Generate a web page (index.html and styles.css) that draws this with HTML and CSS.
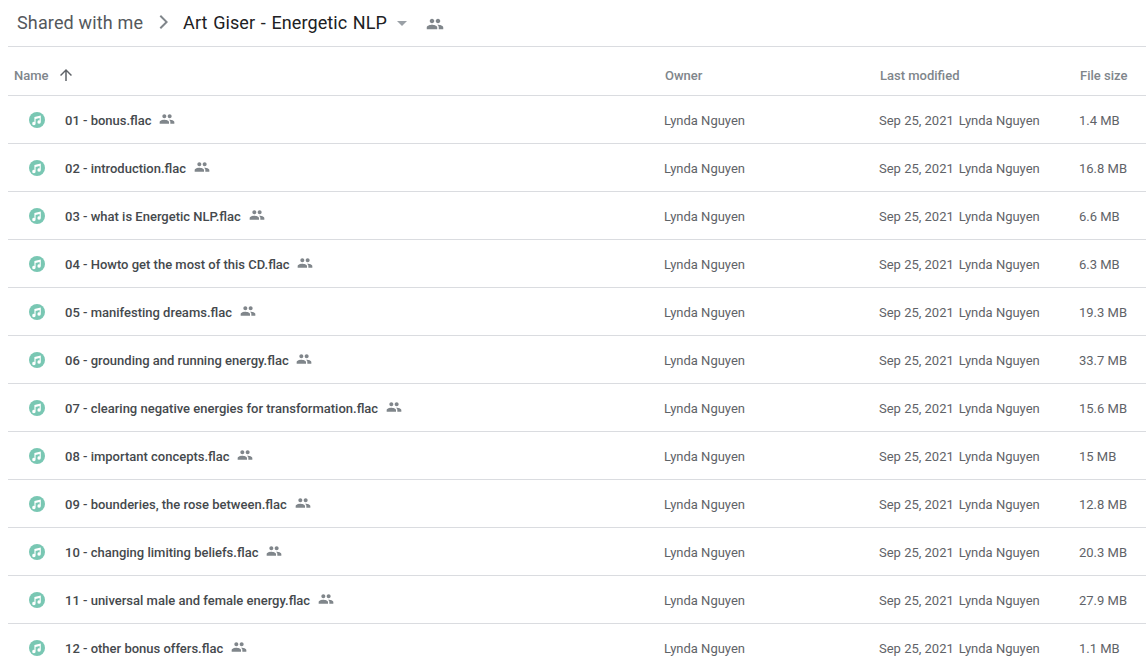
FILE: index.html
```html
<!DOCTYPE html>
<html lang="en">
<head>
<meta charset="utf-8">
<title>Art Giser - Energetic NLP</title>
<link rel="stylesheet" href="styles.css">
</head>
<body>
<svg class="defs" width="0" height="0" aria-hidden="true">
  <symbol id="people" viewBox="0 0 24 24"><path d="M16 11c1.66 0 2.99-1.34 2.99-3S17.66 5 16 5s-3 1.34-3 3 1.34 3 3 3zm-8 0c1.66 0 2.99-1.34 2.99-3S9.66 5 8 5 5 6.34 5 8s1.34 3 3 3zm0 2c-2.33 0-7 1.17-7 3.5V19h14v-2.5C15 14.17 10.33 13 8 13zm8 0c-.29 0-.62.02-.97.05 1.16.84 1.97 1.97 1.97 3.45V19h6v-2.5c0-2.33-4.67-3.5-7-3.5z"/></symbol>
  <symbol id="audio" viewBox="0 0 16 16"><circle cx="8" cy="8" r="8" fill="#79c7b3"/><path fill="#fff" d="M5.4 5 11.8 3.6v6.5a1.7 1.7 0 1 1-1.2-1.6V6L6.6 6.9v4.6a1.7 1.7 0 1 1-1.2-1.6z"/></symbol>
</svg>
<main class="page">
  <header class="crumbs">
    <span class="crumb-parent">Shared with me</span>
    <svg class="crumb-chevron" viewBox="0 0 24 24"><path d="M8.6 6.4 10 5l7 7-7 7-1.4-1.4 5.6-5.6z"/></svg>
    <span class="crumb-current">Art Giser - Energetic NLP</span>
    <span class="crumb-caret"></span>
    <svg class="crumb-people"><use href="#people"/></svg>
  </header>
  <div class="row head">
    <div class="cell-name head-name">Name
      <svg class="sort-arrow" viewBox="0 0 24 24"><path d="M4 12l1.41 1.41L11 7.83V20h2V7.83l5.58 5.59L20 12l-8-8-8 8z"/></svg>
    </div>
    <div class="cell-owner">Owner</div>
    <div class="cell-mod">Last modified</div>
    <div class="cell-size">File size</div>
  </div>
  <div class="row"><div class="cell-name"><svg class="file-icon"><use href="#audio"/></svg><span class="file-name">01 - bonus.flac</span><svg class="shared"><use href="#people"/></svg></div><div class="cell-owner">Lynda Nguyen</div><div class="cell-mod"><span class="date">Sep 25, 2021</span>Lynda Nguyen</div><div class="cell-size">1.4 MB</div></div>
  <div class="row"><div class="cell-name"><svg class="file-icon"><use href="#audio"/></svg><span class="file-name">02 - introduction.flac</span><svg class="shared"><use href="#people"/></svg></div><div class="cell-owner">Lynda Nguyen</div><div class="cell-mod"><span class="date">Sep 25, 2021</span>Lynda Nguyen</div><div class="cell-size">16.8 MB</div></div>
  <div class="row"><div class="cell-name"><svg class="file-icon"><use href="#audio"/></svg><span class="file-name">03 - what is Energetic NLP.flac</span><svg class="shared"><use href="#people"/></svg></div><div class="cell-owner">Lynda Nguyen</div><div class="cell-mod"><span class="date">Sep 25, 2021</span>Lynda Nguyen</div><div class="cell-size">6.6 MB</div></div>
  <div class="row"><div class="cell-name"><svg class="file-icon"><use href="#audio"/></svg><span class="file-name">04 - Howto get the most of this CD.flac</span><svg class="shared"><use href="#people"/></svg></div><div class="cell-owner">Lynda Nguyen</div><div class="cell-mod"><span class="date">Sep 25, 2021</span>Lynda Nguyen</div><div class="cell-size">6.3 MB</div></div>
  <div class="row"><div class="cell-name"><svg class="file-icon"><use href="#audio"/></svg><span class="file-name">05 - manifesting dreams.flac</span><svg class="shared"><use href="#people"/></svg></div><div class="cell-owner">Lynda Nguyen</div><div class="cell-mod"><span class="date">Sep 25, 2021</span>Lynda Nguyen</div><div class="cell-size">19.3 MB</div></div>
  <div class="row"><div class="cell-name"><svg class="file-icon"><use href="#audio"/></svg><span class="file-name">06 - grounding and running energy.flac</span><svg class="shared"><use href="#people"/></svg></div><div class="cell-owner">Lynda Nguyen</div><div class="cell-mod"><span class="date">Sep 25, 2021</span>Lynda Nguyen</div><div class="cell-size">33.7 MB</div></div>
  <div class="row"><div class="cell-name"><svg class="file-icon"><use href="#audio"/></svg><span class="file-name">07 - clearing negative energies for transformation.flac</span><svg class="shared"><use href="#people"/></svg></div><div class="cell-owner">Lynda Nguyen</div><div class="cell-mod"><span class="date">Sep 25, 2021</span>Lynda Nguyen</div><div class="cell-size">15.6 MB</div></div>
  <div class="row"><div class="cell-name"><svg class="file-icon"><use href="#audio"/></svg><span class="file-name">08 - important concepts.flac</span><svg class="shared"><use href="#people"/></svg></div><div class="cell-owner">Lynda Nguyen</div><div class="cell-mod"><span class="date">Sep 25, 2021</span>Lynda Nguyen</div><div class="cell-size">15 MB</div></div>
  <div class="row"><div class="cell-name"><svg class="file-icon"><use href="#audio"/></svg><span class="file-name">09 - bounderies, the rose between.flac</span><svg class="shared"><use href="#people"/></svg></div><div class="cell-owner">Lynda Nguyen</div><div class="cell-mod"><span class="date">Sep 25, 2021</span>Lynda Nguyen</div><div class="cell-size">12.8 MB</div></div>
  <div class="row"><div class="cell-name"><svg class="file-icon"><use href="#audio"/></svg><span class="file-name">10 - changing limiting beliefs.flac</span><svg class="shared"><use href="#people"/></svg></div><div class="cell-owner">Lynda Nguyen</div><div class="cell-mod"><span class="date">Sep 25, 2021</span>Lynda Nguyen</div><div class="cell-size">20.3 MB</div></div>
  <div class="row"><div class="cell-name"><svg class="file-icon"><use href="#audio"/></svg><span class="file-name">11 - universal male and female energy.flac</span><svg class="shared"><use href="#people"/></svg></div><div class="cell-owner">Lynda Nguyen</div><div class="cell-mod"><span class="date">Sep 25, 2021</span>Lynda Nguyen</div><div class="cell-size">27.9 MB</div></div>
  <div class="row"><div class="cell-name"><svg class="file-icon"><use href="#audio"/></svg><span class="file-name">12 - other bonus offers.flac</span><svg class="shared"><use href="#people"/></svg></div><div class="cell-owner">Lynda Nguyen</div><div class="cell-mod"><span class="date">Sep 25, 2021</span>Lynda Nguyen</div><div class="cell-size">1.1 MB</div></div>
</main>
</body>
</html>
```
FILE: styles.css
```css
* { box-sizing: border-box; }
html, body { height: 100%; }
body {
  margin: 0;
  overflow: hidden;
  background: #fff;
  font-family: Roboto, "Liberation Sans", sans-serif;
  color: #5f6368;
}
.defs { position: absolute; }
.page { padding-left: 8px; }
.crumbs {
  display: flex;
  align-items: center;
  height: 47px;
  padding: 0 0 2px 9px;
  border-bottom: 1px solid #dadce0;
  font-size: 18px;
}
.crumb-parent { color: #54585c; letter-spacing: .15px; }
.crumb-chevron { width: 24px; height: 24px; margin: 0 8px; fill: #80868b; }
.crumb-current { color: #202124; letter-spacing: .1px; word-spacing: 1px; }
.crumb-caret {
  width: 0; height: 0;
  margin-left: 10px;
  margin-top: 2px;
  border-left: 5px solid transparent;
  border-right: 5px solid transparent;
  border-top: 5px solid #9aa0a6;
}
.crumb-people { width: 18px; height: 18px; margin-left: 19px; margin-top: 3px; fill: #80868b; }
.row {
  display: grid;
  grid-template-columns: 656px 215px 200px 1fr;
  align-items: center;
  height: 48px;
  padding-top: 2px;
  border-bottom: 1px solid #dadce0;
  font-size: 13px;
}
.head { height: 49px; padding-top: 8px; font-weight: 500; color: #80868b; }
.head .cell-owner, .head .cell-mod, .head .cell-size { padding-left: 1px; }
.head-name { padding-left: 6px; }
.cell-name { display: flex; align-items: center; font-weight: 500; }
.row:not(.head) .cell-name { padding-left: 21px; }
.sort-arrow { width: 18px; height: 18px; margin-left: 8px; fill: #5f6368; }
.file-icon { width: 16px; height: 16px; flex: none; margin-top: -2px; }
.file-name { margin-left: 20px; color: #45494d; }
.shared { width: 16px; height: 16px; margin-left: 7.8px; margin-top: -4px; fill: #80868b; }
.date { margin-right: 5px; }
```
